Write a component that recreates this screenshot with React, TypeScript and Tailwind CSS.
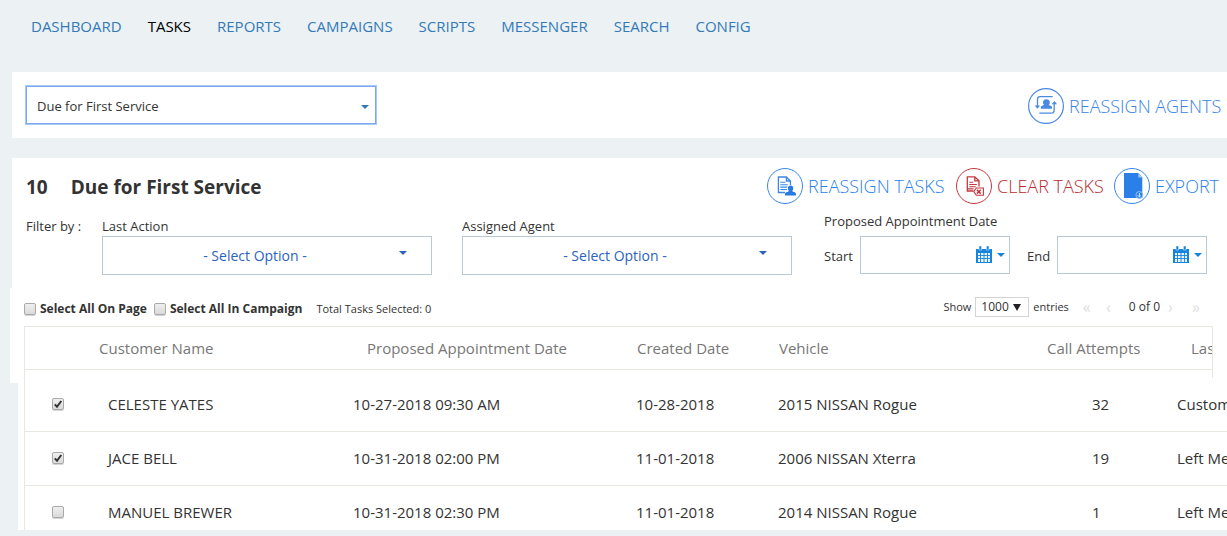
import React from "react";

const NAV = ["DASHBOARD", "TASKS", "REPORTS", "CAMPAIGNS", "SCRIPTS", "MESSENGER", "SEARCH", "CONFIG"];

const ROWS = [
  { name: "CELESTE YATES", date: "10-27-2018 09:30 AM", created: "10-28-2018", vehicle: "2015 NISSAN Rogue", calls: 32, last: "Customer", checked: true },
  { name: "JACE BELL", date: "10-31-2018 02:00 PM", created: "11-01-2018", vehicle: "2006 NISSAN Xterra", calls: 19, last: "Left Message", checked: true },
  { name: "MANUEL BREWER", date: "10-31-2018 02:30 PM", created: "11-01-2018", vehicle: "2014 NISSAN Rogue", calls: 1, last: "Left Message", checked: false },
];

function Caret({ className = "" }: { className?: string }) {
  return (
    <svg viewBox="0 0 8 4" className={`pointer-events-none h-1 w-2 fill-current ${className}`} aria-hidden="true">
      <path d="M0 0h8L4 4z" />
    </svg>
  );
}

function Checkbox({ id, label, checked = false }: { id: string; label?: string; checked?: boolean }) {
  return (
    <span className="grid size-3 shrink-0 place-items-center">
      <input
        id={id}
        type="checkbox"
        aria-label={label}
        defaultChecked={checked}
        className="peer col-start-1 row-start-1 size-3 appearance-none rounded-xs border border-[#a9a9a9] bg-linear-to-b from-[#efefef] to-[#dadada] shadow-[0_1px_0_#d5d5d5]"
      />
      <svg viewBox="0 0 12 12" className="pointer-events-none invisible col-start-1 row-start-1 size-3 peer-checked:visible" aria-hidden="true">
        <path d="M2.8 6.4l2.2 2.4L9.3 3" fill="none" stroke="#333" strokeWidth="2" />
      </svg>
    </span>
  );
}

function AgentsIcon() {
  return (
    <svg viewBox="0 0 36 36" className="size-9 shrink-0" fill="none" stroke="#4a8ae2" aria-hidden="true">
      <circle cx="18" cy="18" r="17.4" strokeWidth="1.2" />
      <path d="M24.7 8.7H12a2.5 2.5 0 0 0-2.5 2.5V18M11.3 25.2H23a3.2 3.2 0 0 0 3.2-3.2v-6.500" strokeWidth="1.3" />
      <path d="M6.700 17.500h5.400L9.400 20.800zM23.700 16.300h5.400L26.400 13z" fill="#4a8ae2" stroke="none" />
      <path d="M15 14.500c0-2.200 1.500-3.200 3.400-3.200s3.400 1 3.400 3.200c0 1.200-.5 2-1.100 2.600.5.500 3.300.6 3.300 2.300v1.400H12.800v-1.400c0-1.700 2.800-1.800 3.300-2.300-.6-.6-1.100-1.400-1.100-2.600z" fill="#4a8ae2" stroke="none" />
    </svg>
  );
}

function TasksIcon() {
  return (
    <svg viewBox="0 0 36 36" className="size-9 shrink-0" fill="none" stroke="#3a86e8" aria-hidden="true">
      <circle cx="18" cy="18" r="17.500" strokeWidth="1" />
      <path d="M18 24.500h-6.600V9h8l4 4v4M19.400 9v4h4" strokeWidth="1.300" />
      <path d="M13.300 14.300h5M13.300 16.700h7.500M13.300 19.100h7M13.300 21.500h6.500" strokeWidth="1.100" />
      <path d="M20.900 20.300c0-1.900 1.200-2.800 2.700-2.800s2.700.9 2.700 2.800c0 1.100-.5 2-1.100 2.700.6 1.100 3.800.9 3.800 3v1.400H18V26c0-2.100 3.300-1.900 3.900-3-.6-.700-1-1.600-1-2.700z" fill="#2a7ae4" stroke="none" />
    </svg>
  );
}

function ClearIcon() {
  return (
    <svg viewBox="0 0 36 36" className="size-9 shrink-0" fill="none" stroke="#c4383c" aria-hidden="true">
      <circle cx="18" cy="18" r="17.500" strokeWidth="1" />
      <path d="M17.500 23h-6.200V8.800h7.500l4.200 4v5.700M18.800 8.800v4H23" strokeWidth="1.300" />
      <path d="M13.300 14.300h4M13.300 16.500h7.500M13.300 18.700h6.500M11.500 20.900h6" strokeWidth="1.100" />
      <path d="M20.300 20h7.100v7.300h-7.100l-2.500-3.600z" strokeWidth="1.100" />
      <path d="M20.900 21.800l3.800 3.800M24.700 21.800l-3.800 3.800" strokeWidth="1.500" />
    </svg>
  );
}

function ExportIcon() {
  return (
    <svg viewBox="0 0 36 36" className="size-9 shrink-0" fill="none" stroke="#3a86e8" aria-hidden="true">
      <circle cx="18" cy="18" r="17.500" strokeWidth="1" />
      <path d="M10 5h14.300l4 4.500V30H10z" fill="#2a7fe8" stroke="none" />
      <path d="M24.300 5v4.500h4z" fill="#9cc6f6" stroke="none" />
      <circle cx="25.400" cy="27" r="3.500" fill="#2a7fe8" stroke="#a9cdf6" strokeWidth=".8" />
      <path d="M25.400 24.800v4M23.800 27.300l1.600 1.600 1.600-1.600" stroke="#fff" strokeWidth=".8" />
    </svg>
  );
}

function CalendarIcon() {
  return (
    <svg viewBox="0 0 16 18" className="h-[18px] w-4" aria-hidden="true">
      <path d="M0 3h16v14H0z" fill="#1683dc" />
      <path d="M2 7h12v9H2z" fill="#e6f2fc" />
      <path d="M3 0h2.600v4H3zM10.400 0H13v4h-2.600z" fill="#1683dc" stroke="#fff" strokeWidth=".5" />
      <path d="M4.500 7v9M8 7v9M11.500 7v9M2 9.500h12M2 12.500h12" stroke="#1683dc" strokeWidth=".9" />
    </svg>
  );
}

function FilterSelect({ id, label }: { id: string; label: string }) {
  return (
    <div className="flex w-[330px] flex-col pt-2">
      <label htmlFor={id} className="text-[13px] leading-5">{label}</label>
      <div className="grid items-center text-[#2b63c0]">
        <select id={id} className="col-start-1 row-start-1 h-[39px] w-full appearance-none border border-[#b9c9d4] bg-white pr-6 text-center text-sm">
          <option>- Select Option -</option>
        </select>
        <Caret className="col-start-1 row-start-1 mr-[25px] mb-1.5 justify-self-end" />
      </div>
    </div>
  );
}

function DateField({ id, label }: { id: string; label: string }) {
  return (
    <div className="flex items-center gap-[7px]">
      <label htmlFor={id} className="pt-[3px] text-[13px]">{label}</label>
      <div className="grid items-center">
        <input id={id} type="text" className="col-start-1 row-start-1 h-[38px] w-[150px] border border-[#b9c9d4] bg-white pr-10 pl-2 text-[13px]" />
        <button type="button" aria-label={`Choose ${label} date`} className="col-start-1 row-start-1 mr-[5px] flex items-center gap-[5px] justify-self-end text-[#1683dc]">
          <CalendarIcon />
          <Caret />
        </button>
      </div>
    </div>
  );
}

export default function App() {
  return (
    <div className="min-h-screen overflow-hidden bg-[#ecf1f4] pb-1.5 font-['Open_Sans','Noto_Sans',sans-serif] text-[#333]">
      <nav className="flex h-[72px] gap-[26px] pt-[15px] pl-[31px] text-[15px] leading-[22px]">
        {NAV.map((n) => (
          <a key={n} href="#" className={n === "TASKS" ? "text-black" : "text-[#337ab7]"}>{n}</a>
        ))}
      </nav>

      <section className="ml-3 flex h-[66px] items-center justify-between bg-white pr-[7px] pl-3.5">
        <div className="grid w-[350px] items-center">
          <select aria-label="Campaign" className="col-start-1 row-start-1 h-[38px] w-full appearance-none border border-[#7ba7ee] bg-white pt-1 pl-2.5 text-[13px] ring-1 ring-[#a9c7f7]">
            <option>Due for First Service</option>
          </select>
          <Caret className="col-start-1 row-start-1 mt-1 mr-[7px] justify-self-end text-[#337ab7]" />
        </div>
        <button type="button" className="flex w-[192px] items-center gap-[5px] pt-0.5 text-lg font-light whitespace-nowrap text-[#3a82e4]">
          <AgentsIcon />
          REASSIGN AGENTS
        </button>
      </section>

      <section className="mt-5 ml-3 bg-white pt-2.5 pl-3.5">
        <header className="flex h-9 items-center justify-between pr-[9px]">
          <h1 className="flex gap-[23px] pt-0.5 text-[19px] font-bold"><span>10</span><span>Due for First Service</span></h1>
          <div className="flex gap-3 text-lg font-light whitespace-nowrap text-[#2a7fe8]">
            <button type="button" className="flex w-[177px] items-center gap-[5px]"><TasksIcon />REASSIGN TASKS</button>
            <button type="button" className="flex w-[146px] items-center gap-[5px] text-[#b92b30]"><ClearIcon />CLEAR TASKS</button>
            <button type="button" className="flex w-[104px] items-center gap-[5px]"><ExportIcon />EXPORT</button>
          </div>
        </header>
        <div className="flex pt-1 pb-[13px]">
          <span className="w-[76px] shrink-0 pt-2 text-[13px] leading-5">Filter by :</span>
          <div className="flex shrink-0 gap-[30px]">
            <FilterSelect id="last-action" label="Last Action" />
            <FilterSelect id="agent" label="Assigned Agent" />
          </div>
          <div role="group" aria-labelledby="appointment-range" className="ml-8 pt-0.5">
            <div id="appointment-range" className="h-[26px] text-[13px] leading-[22px]">Proposed Appointment Date</div>
            <div className="flex gap-[17px]">
              <DateField id="start" label="Start" />
              <DateField id="end" label="End" />
            </div>
          </div>
        </div>
      </section>

      <section className="flex">
        <div className="flex w-6 shrink-0 flex-col">
          <div className="ml-2.5 h-[95px] bg-white" />
          <div className="ml-[18px] flex-1 bg-white" />
        </div>
        <div className="min-w-0 flex-1 overflow-hidden bg-white">
          <div className="flex h-[38px] items-center justify-between text-[11px]">
            <div className="mt-1 flex items-center">
              <Checkbox id="all-page" />
              <label htmlFor="all-page" className="ml-1 text-xs font-bold">Select All On Page</label>
              <span className="ml-[7px] flex"><Checkbox id="all-campaign" /></span>
              <label htmlFor="all-campaign" className="ml-1 text-xs font-bold">Select All In Campaign</label>
              <span className="ml-3.5">Total Tasks Selected: 0</span>
            </div>
            <div className="mr-[27px] flex items-center">
              <label htmlFor="page-size">Show</label>
              <div className="mr-1 ml-1 grid items-center">
                <select id="page-size" className="col-start-1 row-start-1 h-5 w-[54px] appearance-none border border-[#d4d4d4] bg-white pl-[5px] text-xs leading-none">
                  <option>1000</option>
                </select>
                <svg viewBox="0 0 8 7" className="pointer-events-none col-start-1 row-start-1 mr-2 h-[7px] w-2 justify-self-end fill-[#222]" aria-hidden="true"><path d="M0 0h8L4 7z" /></svg>
              </div>
              <span>entries</span>
              <span className="ml-3.5 flex items-center text-[#dedede]">
                <button type="button" aria-label="First page" className="w-4 text-left text-base">«</button>
                <button type="button" aria-label="Previous page" className="w-3 text-right text-base">‹</button>
              </span>
              <span className="mr-2 ml-[18px] text-xs">0 of 0</span>
              <span className="flex items-center text-[#dedede]">
                <button type="button" aria-label="Next page" className="w-6 text-left text-base">›</button>
                <button type="button" aria-label="Last page" className="text-base">»</button>
              </span>
            </div>
          </div>

          <table className="w-full table-fixed border-separate border-spacing-0 text-left text-[15px] leading-5 whitespace-nowrap">
            <colgroup>
              <col className="w-[67px]" />
              <col className="w-[253px]" />
              <col className="w-[283px]" />
              <col className="w-[142px]" />
              <col className="w-[244px]" />
              <col className="w-[155px]" />
              <col />
              <col className="w-3.5" />
            </colgroup>
            <thead className="text-[#777]">
              <tr className="h-11 [&>th]:border-t [&>th]:border-b [&>th]:border-[#e8e8e0] [&>th]:font-normal">
                <th aria-label="Selected" className="border-l" />
                <th className="pl-2">Customer Name</th>
                <th className="pl-[23px]">Proposed Appointment Date</th>
                <th className="pl-2.5">Created Date</th>
                <th className="pl-2.5">Vehicle</th>
                <th className="pl-[34px]">Call Attempts</th>
                <th className="overflow-hidden border-r pl-[23px]">Last Action</th>
                <td />
              </tr>
              <tr className="h-2" aria-hidden="true">
                <td className="border-l border-[#e8e8e0]" />
                <td colSpan={5} />
                <td className="border-r border-[#e8e8e0]" />
                <td />
              </tr>
            </thead>
            <tbody className="[&_td]:border-[#e8e8e0] [&_td]:pt-4 [&_td]:pb-[17px] [&>tr:last-child>td]:pb-2 [&>tr:not(:last-child)>td]:border-b">
              {ROWS.map((r) => (
                <tr key={r.name}>
                  <td className="border-l pl-[27px]"><Checkbox id={r.name} label={`Select ${r.name}`} checked={r.checked} /></td>
                  <td className="pl-[17px]">{r.name}</td>
                  <td className="pl-[9px]">{r.date}</td>
                  <td className="pl-[9px]">{r.created}</td>
                  <td className="pl-[9px]">{r.vehicle}</td>
                  <td className="pl-[79px]">{r.calls}</td>
                  <td colSpan={2} className="overflow-hidden pl-[9px]">{r.last}</td>
                </tr>
              ))}
            </tbody>
          </table>
        </div>
      </section>
    </div>
  );
}
